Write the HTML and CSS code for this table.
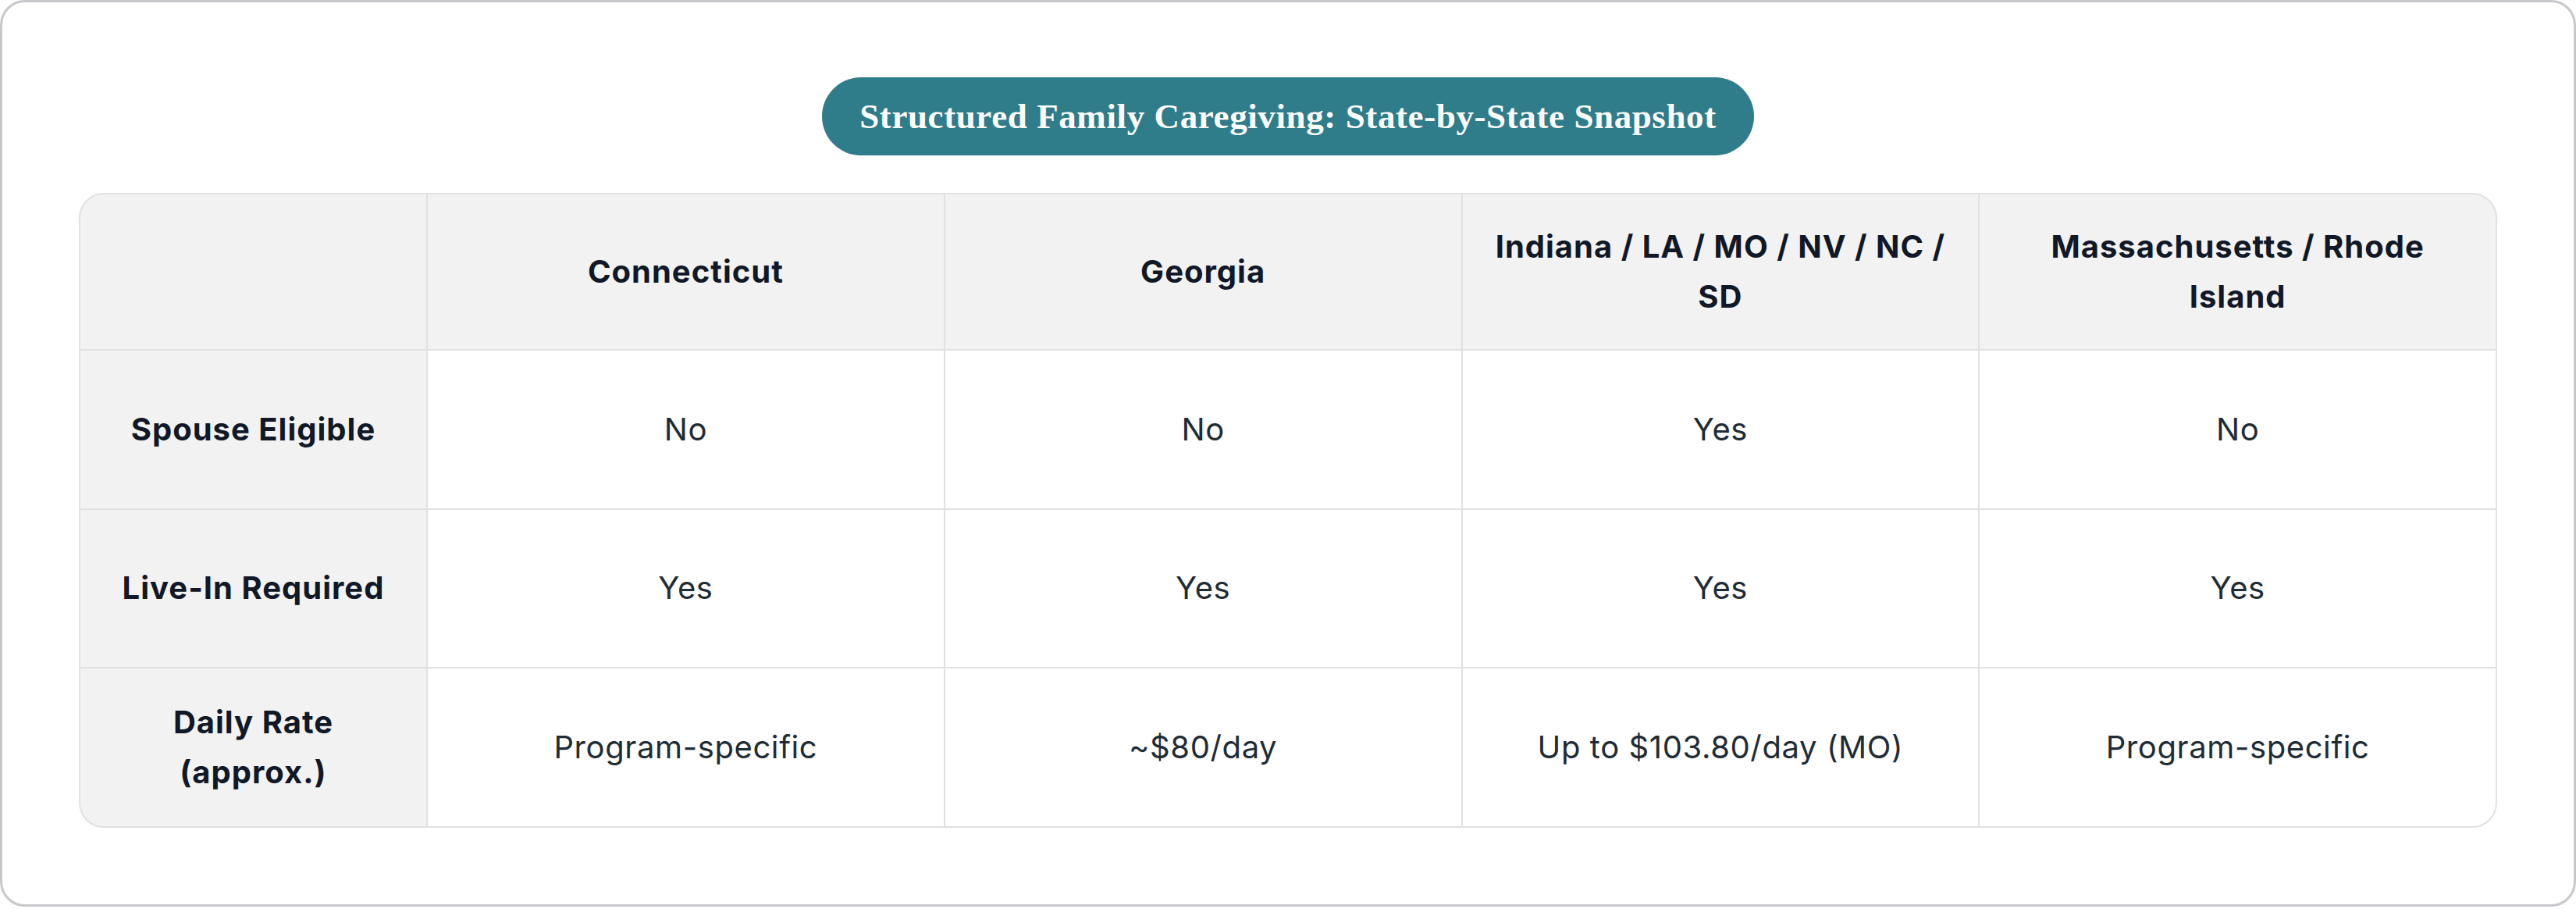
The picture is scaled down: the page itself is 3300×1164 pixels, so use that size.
FILE: index.html
```html
<!DOCTYPE html>
<html lang="en">
<head>
<meta charset="utf-8">
<title>Structured Family Caregiving: State-by-State Snapshot</title>
<link rel="stylesheet" href="styles.css">
</head>
<body>
<main class="card">
  <h1 class="title">Structured Family Caregiving: State-by-State Snapshot</h1>
  <div class="grid" role="table">
    <div class="cell head corner" role="columnheader"></div>
    <div class="cell head" role="columnheader">Connecticut</div>
    <div class="cell head" role="columnheader">Georgia</div>
    <div class="cell head" role="columnheader">Indiana / LA / MO / NV / NC / SD</div>
    <div class="cell head" role="columnheader">Massachusetts / Rhode Island</div>

    <div class="cell label" role="rowheader">Spouse Eligible</div>
    <div class="cell" role="cell">No</div>
    <div class="cell" role="cell">No</div>
    <div class="cell" role="cell">Yes</div>
    <div class="cell" role="cell">No</div>

    <div class="cell label" role="rowheader">Live-In Required</div>
    <div class="cell" role="cell">Yes</div>
    <div class="cell" role="cell">Yes</div>
    <div class="cell" role="cell">Yes</div>
    <div class="cell" role="cell">Yes</div>

    <div class="cell label" role="rowheader">Daily Rate (approx.)</div>
    <div class="cell" role="cell">Program-specific</div>
    <div class="cell" role="cell">~$80/day</div>
    <div class="cell" role="cell">Up to $103.80/day (MO)</div>
    <div class="cell" role="cell">Program-specific</div>
  </div>
</main>
</body>
</html>
```

FILE: styles.css
```css
* { box-sizing: border-box; }

html, body {
  margin: 0;
  padding: 0;
  background: #ffffff;
}

body {
  font-family: Inter, "DejaVu Sans", sans-serif;
  color: #1f2c35;
}

.card {
  width: 3300px;
  height: 1161px;
  border: 3px solid #c8c8cc;
  border-radius: 32px;
  background: #ffffff;
  padding: 96px 98px 97px;
  display: flex;
  flex-direction: column;
  align-items: center;
  gap: 48px;
}

.title {
  margin: 0;
  height: 100px;
  padding: 0 48px;
  display: inline-flex;
  align-items: center;
  border-radius: 50px;
  background: #2f7c8a;
  color: #ffffff;
  font-family: "Liberation Serif", "DejaVu Serif", serif;
  font-weight: 700;
  font-size: 45px;
  letter-spacing: 0.6px;
  white-space: nowrap;
}

.grid {
  align-self: stretch;
  display: grid;
  grid-template-columns: 443px repeat(4, 1fr);
  grid-template-rows: 198px repeat(3, 1fr);
  height: 813px;
  gap: 2px;
  background: #e1e1e1;
  border: 2px solid #e1e1e1;
  border-radius: 32px;
  overflow: hidden;
}

.cell {
  display: flex;
  align-items: center;
  justify-content: center;
  text-align: center;
  padding: 0 36px;
  background: #ffffff;
  font-size: 40px;
  line-height: 64px;
  font-weight: 400;
  letter-spacing: 0.6px;
  color: #1f2c35;
}

.head,
.label {
  background: #f2f2f2;
  font-weight: 700;
  letter-spacing: 1px;
  color: #111827;
}
```
